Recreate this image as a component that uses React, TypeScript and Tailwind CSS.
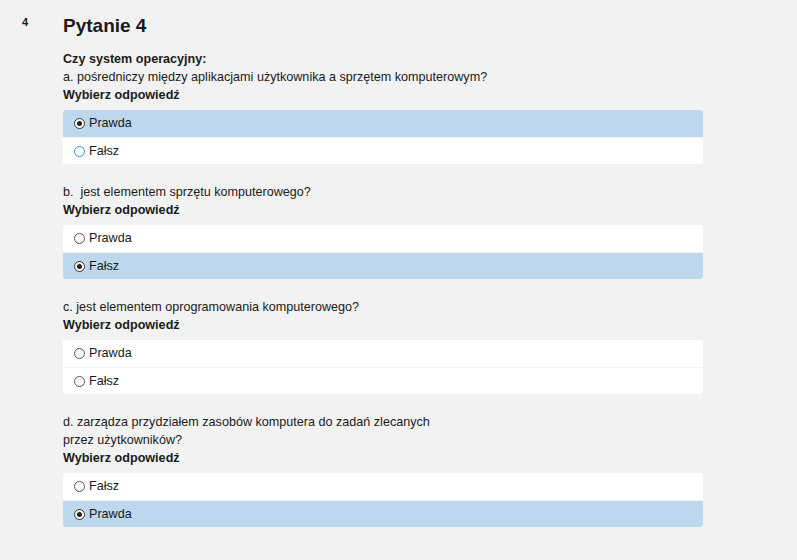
import React from "react";

type Part = {
  lines: string[];
  options: { label: string; checked: boolean; focused?: boolean }[];
};

const PARTS: Part[] = [
  {
    lines: ["a. pośredniczy między aplikacjami użytkownika a sprzętem komputerowym?"],
    options: [
      { label: "Prawda", checked: true },
      { label: "Fałsz", checked: false, focused: true },
    ],
  },
  {
    lines: ["b.  jest elementem sprzętu komputerowego?"],
    options: [
      { label: "Prawda", checked: false },
      { label: "Fałsz", checked: true },
    ],
  },
  {
    lines: ["c. jest elementem oprogramowania komputerowego?"],
    options: [
      { label: "Prawda", checked: false },
      { label: "Fałsz", checked: false },
    ],
  },
  {
    lines: [
      "d. zarządza przydziałem zasobów komputera do zadań zlecanych",
      "przez użytkowników?",
    ],
    options: [
      { label: "Fałsz", checked: false },
      { label: "Prawda", checked: true },
    ],
  },
];

function Radio({ checked, focused }: { checked: boolean; focused?: boolean }) {
  return (
    <span
      className={[
        "flex h-[11px] w-[11px] items-center justify-center rounded-full border bg-white",
        checked ? "border-[#333]" : focused ? "border-[#3b8fe0]" : "border-[#555]",
      ].join(" ")}
    >
      {checked && <span className="h-[5px] w-[5px] rounded-full bg-[#222]" />}
    </span>
  );
}

export default function App() {
  return (
    <div className="min-h-[560px] bg-[#f2f2f2] font-['Liberation_Sans',Arial,sans-serif] text-[#1a1a1a]">
      <div className="flex pt-[14px]">
        <div className="w-[63px] pl-[22px] text-[11px] font-bold">4</div>
        <div className="w-[640px]">
          <h2 className="text-[19px] font-bold leading-[23px]">Pytanie 4</h2>
          <div className="mt-[13px] text-[12.6px] font-bold leading-[18px]">
            Czy system operacyjny:
          </div>
          {PARTS.map((part, i) => (
            <div key={i} className={i === 0 ? "" : "mt-[19px]"}>
              {part.lines.map((l) => (
                <div key={l} className="text-[12.6px] leading-[18px] whitespace-pre">
                  {l}
                </div>
              ))}
              <div className="text-[12.6px] font-bold leading-[18px]">Wybierz odpowiedź</div>
              <div className="mt-[6px] overflow-hidden rounded-[3px]">
                {part.options.map((o, j) => (
                  <div
                    key={o.label}
                    className={[
                      "flex h-[27px] items-center gap-[4px] pl-[11px] text-[12.6px]",
                      o.checked ? "bg-[#bdd7ee]" : "bg-white",
                      j > 0 ? "border-t border-[#eef3f8]" : "",
                    ].join(" ")}
                  >
                    <Radio checked={o.checked} focused={o.focused} />
                    <span>{o.label}</span>
                  </div>
                ))}
              </div>
            </div>
          ))}
        </div>
      </div>
    </div>
  );
}
